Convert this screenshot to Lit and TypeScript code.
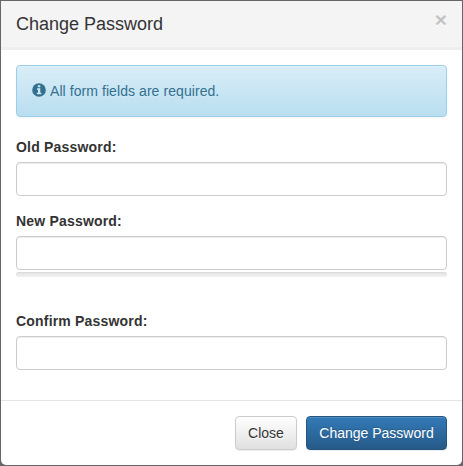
import { LitElement, html, css } from "lit";
import { customElement, property } from "lit/decorators.js";

@customElement("password-field")
class PasswordField extends LitElement {
  @property() label = "";
  @property({ type: Boolean }) meter = false;

  static styles = css`
    :host { display: block; margin-bottom: 15px; }
    .label {
      display: block; font-weight: 700; line-height: 20px; margin-bottom: 5px;
      letter-spacing: 0.19px;
    }
    .input {
      display: block; box-sizing: border-box; width: 100%; height: 34px;
      padding: 6px 12px; border: 1px solid #ccc; border-radius: 4px;
      background: #fff; font: inherit; color: #555; outline: none;
      box-shadow: inset 0 1px 1px rgba(0, 0, 0, 0.075);
    }
    .meter {
      height: 5px; margin: 2px 0 34px; border-radius: 4px;
      background: linear-gradient(#e4e4e4, #f1f1f1);
      box-shadow: inset 0 1px 2px rgba(0, 0, 0, 0.05);
    }
  `;

  render() {
    return html`
      <label class="label" for="field">${this.label}</label>
      <input class="input" id="field" type="password" />
      ${this.meter ? html`<div class="meter"></div>` : ""}
    `;
  }
}

@customElement("app-root")
class AppRoot extends LitElement {
  static styles = css`
    :host {
      display: block; box-sizing: border-box; height: 100vh; padding: 1px;
      background: #676567; overflow: hidden;
      font: 14px/20px "Liberation Sans", Arial, sans-serif; color: #333;
    }
    .modal {
      display: flex; flex-direction: column; box-sizing: border-box; height: 100%;
      background: #fff; border-radius: 0 0 5px 5px; overflow: hidden;
    }
    .header {
      display: flex; justify-content: space-between; box-sizing: border-box;
      height: 49px; padding: 10px 15px 0; background: #f4f4f4;
      border-bottom: 3px solid #eee;
    }
    .title { margin: 0; font-size: 18px; font-weight: 400; line-height: 26px; }
    .close {
      padding: 0; margin-top: -2px; height: 21px; border: 0; background: none;
      font: 700 21px/21px "Liberation Sans", Arial, sans-serif;
      color: #c3c3c3; text-shadow: 0 1px 0 #fff;
    }
    .body { padding: 15px 15px 0; height: 350px; box-sizing: border-box; }
    .alert {
      display: flex; align-items: center; box-sizing: border-box; height: 52px;
      padding: 0 15px; margin-bottom: 20px; gap: 4px;
      border: 1px solid #9acfea; border-radius: 4px; color: #31708f;
      background: linear-gradient(#d9edf7, #b9def0);
      text-shadow: 0 1px 0 rgba(255, 255, 255, 0.2);
      box-shadow: inset 0 1px 0 rgba(255, 255, 255, 0.25), 0 1px 2px rgba(0, 0, 0, 0.05);
    }
    .message { letter-spacing: 0.07px; }
    .info { display: block; width: 14px; height: 14px; margin-top: -2px; }
    .footer {
      flex: 1; display: flex; justify-content: flex-end; align-items: flex-start;
      gap: 9px; padding: 15px 15px 0; border-top: 1px solid #e5e5e5;
    }
    .btn {
      box-sizing: border-box; height: 34px; padding: 6px 12px; border-radius: 4px;
      font: inherit; white-space: nowrap;
      box-shadow: inset 0 1px 0 rgba(255, 255, 255, 0.15), 0 1px 1px rgba(0, 0, 0, 0.075);
    }
    .default {
      width: 62px; border: 1px solid #ccc; color: #333;
      background: linear-gradient(#fff, #e0e0e0); text-shadow: 0 1px 0 #fff;
    }
    .primary {
      width: 141px; border: 1px solid #245580; color: #fff;
      background: linear-gradient(#337ab7, #265a88);
      text-shadow: 0 -1px 0 rgba(0, 0, 0, 0.2);
    }
  `;

  render() {
    return html`
      <div class="modal" role="dialog">
        <header class="header">
          <h4 class="title">Change Password</h4>
          <button class="close" aria-label="Close">×</button>
        </header>
        <main class="body">
          <div class="alert">
            <svg class="info" viewBox="0 0 14 14">
              <circle cx="7" cy="7" r="6.8" fill="#31708f" />
              <path d="M5.8 2.3h2.5v1.9H5.8zM5 5.3h3.3v4.4H9.4v1.5H4.8V9.7H6V6.8H5z" fill="#d0e8f3" />
            </svg>
            <span class="message">All form fields are required.</span>
          </div>
          <password-field label="Old Password:"></password-field>
          <password-field label="New Password:" meter></password-field>
          <password-field label="Confirm Password:"></password-field>
        </main>
        <footer class="footer">
          <button class="btn default">Close</button>
          <button class="btn primary">Change Password</button>
        </footer>
      </div>
    `;
  }
}
